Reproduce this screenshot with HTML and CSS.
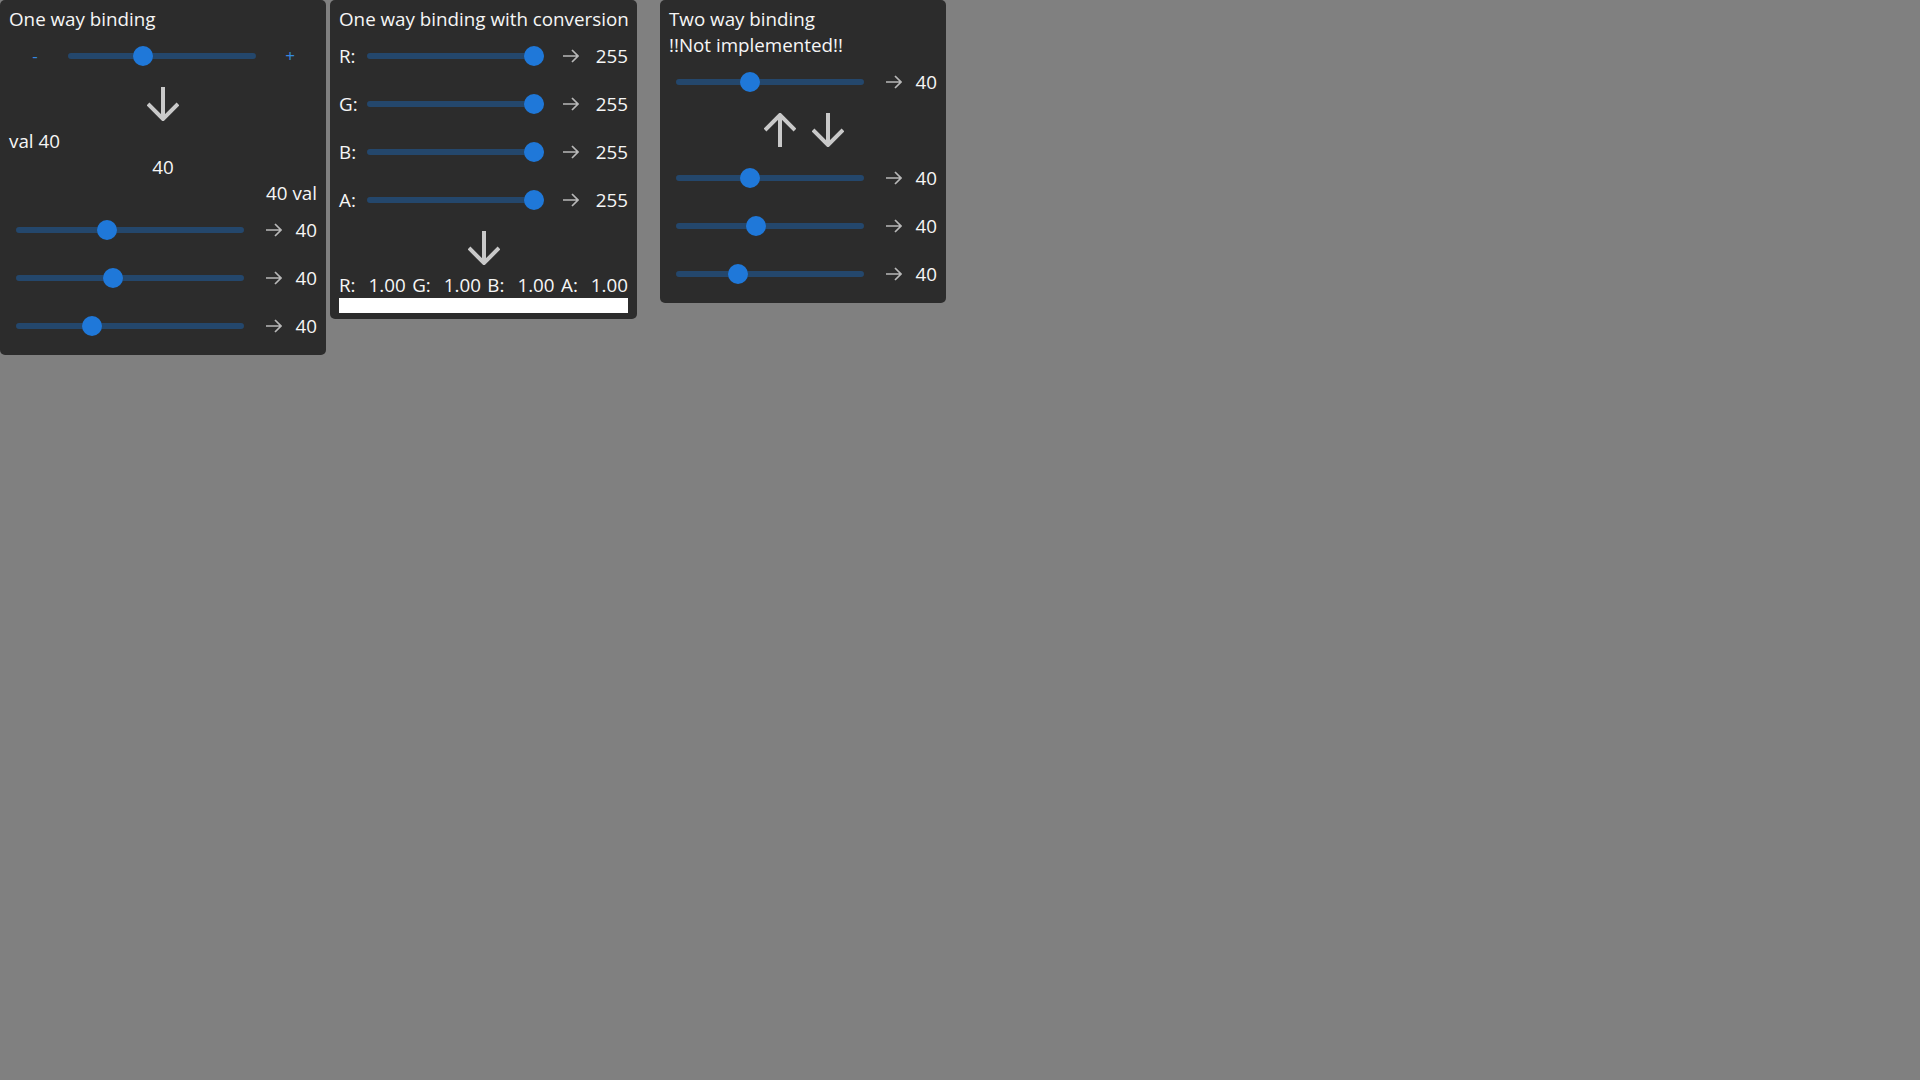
FILE: index.html
```html
<!doctype html>
<html lang="en">
  <head>
    <meta charset="UTF-8" />
    <title>Bindings</title>
    <link rel="stylesheet" href="styles.css">
  </head>
  <body>
    <div class="board">
      <!-- One way binding -->
      <div class="panel panel-one">
        <div class="line">One way binding</div>
        <div class="stepper">
          <button class="step-btn">-</button>
          <input class="slider" type="range" min="0" max="100" value="38.5" step="0.5" />
          <button class="step-btn">+</button>
        </div>
        <div class="arrows">
          <svg class="big-arrow" width="32" height="34" viewBox="0 0 32 34">
            <path d="M16 0 V32 M1 17 L16 32 L31 17" />
          </svg>
        </div>
        <div class="line">val 40</div>
        <div class="line center">40</div>
        <div class="line right">40 val</div>
        <div class="row">
          <input class="slider" type="range" min="0" max="100" value="39" />
          <svg class="small-arrow" width="16" height="14" viewBox="0 0 16 14"><path d="M0 7 H15 M9 1 L15 7 L9 13" /></svg>
          <span class="value">40</span>
        </div>
        <div class="row">
          <input class="slider" type="range" min="0" max="100" value="42" />
          <svg class="small-arrow" width="16" height="14" viewBox="0 0 16 14"><path d="M0 7 H15 M9 1 L15 7 L9 13" /></svg>
          <span class="value">40</span>
        </div>
        <div class="row">
          <input class="slider" type="range" min="0" max="100" value="32" />
          <svg class="small-arrow" width="16" height="14" viewBox="0 0 16 14"><path d="M0 7 H15 M9 1 L15 7 L9 13" /></svg>
          <span class="value">40</span>
        </div>
      </div>

      <!-- One way binding with conversion -->
      <div class="panel panel-two">
        <div class="line">One way binding with conversion</div>
        <div class="row labeled">
          <span class="label">R:</span>
          <input class="slider" type="range" min="0" max="255" value="255" />
          <svg class="small-arrow" width="16" height="14" viewBox="0 0 16 14"><path d="M0 7 H15 M9 1 L15 7 L9 13" /></svg>
          <span class="value">255</span>
        </div>
        <div class="row labeled">
          <span class="label">G:</span>
          <input class="slider" type="range" min="0" max="255" value="255" />
          <svg class="small-arrow" width="16" height="14" viewBox="0 0 16 14"><path d="M0 7 H15 M9 1 L15 7 L9 13" /></svg>
          <span class="value">255</span>
        </div>
        <div class="row labeled">
          <span class="label">B:</span>
          <input class="slider" type="range" min="0" max="255" value="255" />
          <svg class="small-arrow" width="16" height="14" viewBox="0 0 16 14"><path d="M0 7 H15 M9 1 L15 7 L9 13" /></svg>
          <span class="value">255</span>
        </div>
        <div class="row labeled">
          <span class="label">A:</span>
          <input class="slider" type="range" min="0" max="255" value="255" />
          <svg class="small-arrow" width="16" height="14" viewBox="0 0 16 14"><path d="M0 7 H15 M9 1 L15 7 L9 13" /></svg>
          <span class="value">255</span>
        </div>
        <div class="arrows">
          <svg class="big-arrow" width="32" height="34" viewBox="0 0 32 34">
            <path d="M16 0 V32 M1 17 L16 32 L31 17" />
          </svg>
        </div>
        <div class="line channels">
          <span class="channel"><span>R:</span><span>1.00</span></span>
          <span class="channel"><span>G:</span><span>1.00</span></span>
          <span class="channel"><span>B:</span><span>1.00</span></span>
          <span class="channel"><span>A:</span><span>1.00</span></span>
        </div>
        <div class="swatch"></div>
      </div>

      <!-- Two way binding -->
      <div class="panel panel-three">
        <div class="line">Two way binding</div>
        <div class="line">!!Not implemented!!</div>
        <div class="row">
          <input class="slider" type="range" min="0" max="100" value="38.5" step="0.5" />
          <svg class="small-arrow" width="16" height="14" viewBox="0 0 16 14"><path d="M0 7 H15 M9 1 L15 7 L9 13" /></svg>
          <span class="value">40</span>
        </div>
        <div class="arrows pair">
          <svg class="big-arrow" width="32" height="34" viewBox="0 0 32 34">
            <path d="M16 34 V2 M1 17 L16 2 L31 17" />
          </svg>
          <svg class="big-arrow" width="32" height="34" viewBox="0 0 32 34">
            <path d="M16 0 V32 M1 17 L16 32 L31 17" />
          </svg>
        </div>
        <div class="row">
          <input class="slider" type="range" min="0" max="100" value="38.5" step="0.5" />
          <svg class="small-arrow" width="16" height="14" viewBox="0 0 16 14"><path d="M0 7 H15 M9 1 L15 7 L9 13" /></svg>
          <span class="value">40</span>
        </div>
        <div class="row">
          <input class="slider" type="range" min="0" max="100" value="41.5" step="0.5" />
          <svg class="small-arrow" width="16" height="14" viewBox="0 0 16 14"><path d="M0 7 H15 M9 1 L15 7 L9 13" /></svg>
          <span class="value">40</span>
        </div>
        <div class="row">
          <input class="slider" type="range" min="0" max="100" value="31" />
          <svg class="small-arrow" width="16" height="14" viewBox="0 0 16 14"><path d="M0 7 H15 M9 1 L15 7 L9 13" /></svg>
          <span class="value">40</span>
        </div>
      </div>
    </div>
  </body>
</html>
```
FILE: styles.css
```css
* {
  margin: 0;
  padding: 0;
  box-sizing: border-box;
}

body {
  font-family: "Open Sans", "Noto Sans", sans-serif;
  font-size: 18.8px;
  background: #808080;
  color: #f6f6f6;
  min-height: 100vh;
}

.board {
  display: flex;
  align-items: flex-start;
}

.panel {
  background: #2c2c2c;
  border-radius: 5px;
  padding: 6px 9px 5px;
  display: flex;
  flex-direction: column;
}

.panel-one {
  width: 326px;
}

.panel-two {
  width: 307px;
  margin-left: 4px;
  padding-bottom: 6px;
}

.panel-three {
  width: 286px;
  margin-left: 23px;
}

.line {
  height: 26px;
  line-height: 26px;
  white-space: nowrap;
}

.line.center {
  text-align: center;
}

.line.right {
  text-align: right;
}

/* sliders */
.slider {
  -webkit-appearance: none;
  appearance: none;
  background: transparent;
  height: 20px;
  margin: 0;
  min-width: 0;
  flex: 1;
  outline: none;
}

.slider::-webkit-slider-runnable-track {
  height: 6px;
  border-radius: 3px;
  background: #24476c;
}

.slider::-webkit-slider-thumb {
  -webkit-appearance: none;
  appearance: none;
  width: 20px;
  height: 20px;
  border-radius: 50%;
  background: #1f78d9;
  margin-top: -7px;
}

.stepper {
  height: 48px;
  display: grid;
  grid-template-columns: 52px 1fr 54px;
  column-gap: 7px;
  align-items: center;
}

.step-btn {
  background: none;
  border: none;
  color: #3489e0;
  font-family: "Open Sans", sans-serif;
  font-size: 17px;
  line-height: 20px;
  text-align: center;
}

.row {
  height: 48px;
  display: flex;
  align-items: center;
  padding-left: 7px;
}

.row.labeled {
  padding-left: 0;
}

.label {
  width: 28px;
}

.small-arrow {
  margin-left: 22px;
  margin-right: 14px;
  fill: none;
  stroke: #b8b8b8;
  stroke-width: 1.7;
}

.panel-two .small-arrow {
  margin-left: 19px;
  margin-right: 17px;
}

.arrows {
  height: 48px;
  display: flex;
  justify-content: center;
  align-items: center;
}

.arrows.pair {
  gap: 16px;
  padding-left: 2px;
}

.big-arrow {
  fill: none;
  stroke: #c9c9c9;
  stroke-width: 4;
}

.channels {
  display: flex;
  justify-content: space-between;
}

.channel {
  display: flex;
  gap: 13px;
}

.swatch {
  height: 15px;
  background: #ffffff;
}
```
